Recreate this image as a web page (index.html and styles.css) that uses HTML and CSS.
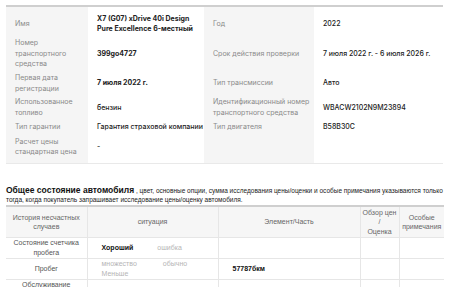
FILE: index.html
```
<!DOCTYPE html>
<html lang="ru">
<head>
<meta charset="utf-8">
<link rel="stylesheet" href="styles.css">
</head>
<body>
<div class="spec">
  <table class="spec-table">
    <colgroup><col class="c1"><col class="c2"><col class="c3"><col class="c4"></colgroup>
    <tr class="first">
      <th>Имя</th>
      <td class="strong">X7 (G07) xDrive 40i Design Pure Excellence 6-местный</td>
      <th>Год</th>
      <td>2022</td>
    </tr>
    <tr>
      <th>Номер транспортного средства</th>
      <td class="strong">399go4727</td>
      <th>Срок действия проверки</th>
      <td>7 июля 2022 г. - 6 июля 2026 г.</td>
    </tr>
    <tr>
      <th>Первая дата регистрации</th>
      <td class="strong">7 июля 2022 г.</td>
      <th>Тип трансмиссии</th>
      <td>Авто</td>
    </tr>
    <tr>
      <th>Использованное топливо</th>
      <td>бензин</td>
      <th>Идентификационный номер транспортного средства</th>
      <td>WBACW2102N9M23894</td>
    </tr>
    <tr>
      <th>Тип гарантии</th>
      <td>Гарантия страховой компании</td>
      <th>Тип двигателя</th>
      <td>B58B30C</td>
    </tr>
    <tr class="last">
      <th>Расчет цены стандартная цена</th>
      <td>-</td>
      <th></th>
      <td></td>
    </tr>
  </table>
</div>

<p class="note"><strong class="title">Общее состояние автомобиля</strong> , цвет, основные опции, сумма исследования цены/оценки и особые примечания указываются только тогда, когда покупатель запрашивает исследование цены/оценку автомобиля.</p>

<table class="state">
  <colgroup><col class="s1"><col class="s2"><col class="s3"><col class="s4"><col class="s5"></colgroup>
  <tr class="head">
    <th>История несчастных случаев</th>
    <th>ситуация</th>
    <th>Элемент/Часть</th>
    <th>Обзор цен<br>/<br>Оценка</th>
    <th>Особые примечания</th>
  </tr>
  <tr>
    <td class="name">Состояние счетчика пробега</td>
    <td class="opts"><span class="opt on">Хороший</span><span class="opt">ошибка</span></td>
    <td class="part"></td>
    <td></td>
    <td></td>
  </tr>
  <tr>
    <td class="name">Пробег</td>
    <td class="opts"><span class="opt">множество</span><span class="opt wide">обычно</span><span class="opt">Меньше</span></td>
    <td class="part">57787бкм</td>
    <td></td>
    <td></td>
  </tr>
  <tr>
    <td class="name">Обслуживание автомобиля</td>
    <td class="opts"></td>
    <td class="part"></td>
    <td></td>
    <td></td>
  </tr>
</table>
</body>
</html>
```
FILE: styles.css
```
html, body {
  margin: 0;
  padding: 0;
  background: #fff;
}

body {
  font-family: "Inter", "Liberation Sans", sans-serif;
  color: #222;
}

.spec {
  margin: 5px 0 0 6px;
  width: 437px;
  border-top: 2px solid #cfcfcf;
  border-bottom: 1px solid #e9e9e9;
}

.spec-table {
  width: 100%;
  border-collapse: collapse;
  table-layout: fixed;
  font-size: 7px;
  line-height: 10.7px;
}

.c1 { width: 82px; }
.c2 { width: 116px; }
.c3 { width: 110px; }
.c4 { width: 129px; }

.spec-table th {
  background: #f5f5f5;
  color: #8a8a8a;
  font-weight: 400;
  text-align: left;
  vertical-align: middle;
  padding: 1.5px 1px 1.5px 9px;
}

.spec-table td {
  background: #fff;
  color: #222;
  font-weight: 500;
  vertical-align: middle;
  padding: 1.5px 1px 1.5px 9px;
}

.spec-table td.strong {
  font-weight: 700;
}

.spec-table tr.first th,
.spec-table tr.first td {
  padding-top: 6.5px;
}

.spec-table tr.last th,
.spec-table tr.last td {
  padding-top: 2.5px;
  padding-bottom: 5.5px;
}

.note {
  margin: 21.5px 6px 0 6px;
  font-family: "Liberation Sans", Arial, sans-serif;
  font-size: 6.5px;
  line-height: 9.5px;
  color: #222;
}

.note .title {
  font-size: 8.5px;
  font-weight: 700;
  color: #111;
}

.state {
  margin: 0 0 0 6px;
  width: 438px;
  border-collapse: collapse;
  table-layout: fixed;
  border-top: 2px solid #cfcfcf;
  font-family: "Liberation Sans", Arial, sans-serif;
  font-size: 7px;
  line-height: 10px;
}

.s1 { width: 81px; }
.s2 { width: 131px; }
.s3 { width: 142px; }
.s4 { width: 39px; }
.s5 { width: 45px; }

.state th {
  background: #f6f6f6;
  color: #666;
  font-weight: 400;
  text-align: center;
  vertical-align: middle;
  line-height: 9.5px;
  padding: 1px 1px;
  border-left: 1px solid #e6e6e6;
  border-bottom: 1px solid #e6e6e6;
}

.state td {
  color: #555;
  vertical-align: middle;
  padding: 0 3px;
  height: 20px;
  border-left: 1px solid #e6e6e6;
  border-bottom: 1px solid #e6e6e6;
}

.state th:first-child,
.state td:first-child {
  border-left: none;
}

.state td.name {
  text-align: center;
}

.state td.opts {
  padding-left: 14px;
}

.opt {
  display: inline-block;
  margin-right: 24px;
  color: #b5b5b5;
}

.opt.wide {
  margin-left: 2px;
}

.opt.on {
  color: #111;
  font-weight: 700;
}

.state td.part {
  padding-left: 14px;
  color: #111;
  font-weight: 700;
}
```
